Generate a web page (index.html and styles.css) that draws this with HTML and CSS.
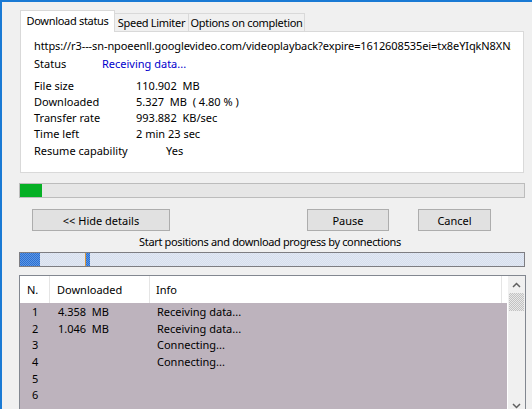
FILE: index.html
```html
<!DOCTYPE html>
<html lang="en">
<head>
  <meta charset="UTF-8" />
  <title>Download status</title>
  <link rel="stylesheet" href="styles.css">
</head>
<body>
  <div class="window">
    <div class="tabs">
      <div class="tab active">Download status</div>
      <div class="tab">Speed Limiter</div>
      <div class="tab">Options on completion</div>
    </div>

    <div class="panel">
      <div class="url">https://r3---sn-npoeenll.googlevideo.com/videoplayback?expire=1612608535ei=tx8eYIqkN8XNz7sF</div>
      <div class="status-row">
        <span class="status-label">Status</span>
        <span class="status-value">Receiving data...</span>
      </div>
      <div class="info">
        <div class="info-row"><span class="label">File size</span><span>110.902&nbsp; MB</span></div>
        <div class="info-row"><span class="label">Downloaded</span><span>5.327&nbsp; MB&nbsp; ( 4.80 % )</span></div>
        <div class="info-row"><span class="label">Transfer rate</span><span>993.882&nbsp; KB/sec</span></div>
        <div class="info-row"><span class="label">Time left</span><span>2 min 23 sec</span></div>
        <div class="info-row resume"><span class="label">Resume capability</span><span class="yes">Yes</span></div>
      </div>
    </div>

    <div class="progress"><div class="progress-fill" style="width: 22px"></div></div>

    <div class="buttons">
      <button class="btn btn-details">&lt;&lt; Hide details</button>
      <button class="btn btn-pause">Pause</button>
      <button class="btn btn-cancel">Cancel</button>
    </div>

    <div class="caption">Start positions and download progress by connections</div>

    <div class="conn-bar">
      <div class="seg" style="left: 0; width: 20px"></div>
      <div class="marker" style="left: 65px"></div>
      <div class="seg" style="left: 66px; width: 4px"></div>
    </div>

    <div class="list">
      <div class="list-body">
        <div class="list-head">
          <div class="col-n">N.</div>
          <div class="col-dl">Downloaded</div>
          <div class="col-info">Info</div>
        </div>
        <div class="rows">
          <div class="row"><span class="col-n">1</span><span class="col-dl">4.358&nbsp; MB</span><span class="col-info">Receiving data...</span></div>
          <div class="row"><span class="col-n">2</span><span class="col-dl">1.046&nbsp; MB</span><span class="col-info">Receiving data...</span></div>
          <div class="row"><span class="col-n">3</span><span class="col-dl"></span><span class="col-info">Connecting...</span></div>
          <div class="row"><span class="col-n">4</span><span class="col-dl"></span><span class="col-info">Connecting...</span></div>
          <div class="row"><span class="col-n">5</span><span class="col-dl"></span><span class="col-info"></span></div>
          <div class="row"><span class="col-n">6</span><span class="col-dl"></span><span class="col-info"></span></div>
        </div>
      </div>
      <div class="scrollbar">
        <svg class="arrow" width="9" height="6" viewBox="0 0 9 6"><path d="M1 5 L4.5 1.5 L8 5" fill="none" stroke="#606060" stroke-width="1.5"/></svg>
        <div class="thumb"></div>
        <div class="track"></div>
        <svg class="arrow" width="9" height="6" viewBox="0 0 9 6"><path d="M1 1 L4.5 4.5 L8 1" fill="none" stroke="#606060" stroke-width="1.5"/></svg>
      </div>
    </div>
  </div>
</body>
</html>
```

FILE: styles.css
```css
body {
  margin: 0;
  background: #f0f0f0;
  font-family: 'Noto Sans', sans-serif;
  font-size: 11px;
  color: #000;
}
.window {
  height: 407px;
  border-top: 2px solid #1a7ad4;
  border-left: 2px solid #1a7ad4;
  overflow: hidden;
}
.tabs {
  display: flex;
  align-items: flex-end;
  margin: 8px 0 0 18px;
  position: relative;
  z-index: 1;
}
.tab {
  height: 17px;
  line-height: 17px;
  box-sizing: content-box;
  border: 1px solid #d9d9d9;
  border-bottom: none;
  border-left: none;
  background: #f0f0f0;
  text-align: center;
  letter-spacing: -0.3px;
  white-space: nowrap;
}
.tab.active {
  height: 21px;
  line-height: 20px;
  width: 93px;
  border-left: 1px solid #d9d9d9;
  background: #fff;
  margin-bottom: -1px;
}
.tab:nth-child(2) { width: 73px; }
.tab:nth-child(3) { width: 115px; }
.panel {
  margin: 0 8px 0 18px;
  border: 1px solid #d9d9d9;
  background: #fff;
  padding: 6px 0 0 13px;
  box-sizing: border-box;
  height: 142px;
  line-height: 16px;
  overflow: hidden;
}
.url {
  white-space: nowrap;
  overflow: hidden;
  width: 477px;
  letter-spacing: -0.1px;
}
.status-row {
  display: flex;
  margin-top: 2px;
}
.status-label { width: 68px; }
.status-value { color: #0000cc; }
.info { margin-top: 6px; }
.info-row { display: flex; white-space: nowrap; }
.label { width: 102px; }
.resume { margin-top: 1px; }
.yes { margin-left: 30px; }
.progress {
  margin: 10px 0 0 17px;
  width: 506px;
  height: 15px;
  box-sizing: border-box;
  border: 1px solid #bcbcbc;
  background: #e6e6e6;
}
.progress-fill {
  height: 100%;
  background: #06b025;
}
.buttons {
  display: flex;
  margin: 11px 0 0 30px;
}
.btn {
  height: 22px;
  padding: 0;
  font-family: inherit;
  font-size: 11px;
  background: #e1e1e1;
  border: 1px solid #adadad;
  color: #000;
}
.btn-details { width: 138px; }
.btn-pause { width: 82px; margin-left: 137px; }
.btn-cancel { width: 73px; margin-left: 29px; }
.caption {
  text-align: center;
  margin: 3px 0 0 6px;
  line-height: 16px;
  letter-spacing: -0.35px;
}
.conn-bar {
  position: relative;
  margin: 2px 0 0 17px;
  width: 506px;
  height: 15px;
  box-sizing: border-box;
  border: 1px solid #7d7d82;
  background: repeating-conic-gradient(#e2e8f3 0 25%, #d6dfee 0 50%) 0 0 / 2px 2px;
}
.seg {
  position: absolute;
  top: 0;
  height: 13px;
  background: repeating-conic-gradient(#2d6fcf 0 25%, #5b97e6 0 50%) 0 0 / 2px 2px;
}
.marker {
  position: absolute;
  top: 0;
  width: 1px;
  height: 13px;
  background: #d8963a;
}
.list {
  display: flex;
  margin: 8px 0 0 17px;
  width: 507px;
  height: 140px;
  box-sizing: border-box;
  border: 1px solid #828790;
  background: #fff;
}
.list-body {
  flex: 1;
  overflow: hidden;
}
.list-head {
  display: flex;
  height: 27px;
  line-height: 27px;
  background: #fff;
  width: 481px;
  border-right: 1px solid #e5e5e5;
}
.list-head .col-n,
.list-head .col-dl {
  border-right: 1px solid #e5e5e5;
}
.col-n { width: 30px; padding-left: 7px; box-sizing: border-box; }
.col-dl { width: 100px; padding-left: 7px; box-sizing: border-box; }
.col-info { padding-left: 6px; }
.rows {
  background: #bdb3bd;
  width: 487px;
  height: 120px;
  padding-top: 1px;
}
.row {
  display: flex;
  height: 16.7px;
  line-height: 16.7px;
}
.row .col-n { padding-left: 12px; }
.row .col-dl { padding-left: 8px; }
.row .col-info { padding-left: 7px; }
.scrollbar {
  width: 17px;
  background: #f0f0f0;
  display: flex;
  flex-direction: column;
  align-items: center;
}
.arrow { margin: 6px 0 5px; flex: none; }
.thumb {
  width: 15px;
  height: 18px;
  flex: none;
  background: repeating-conic-gradient(#c2c2c2 0 25%, #e8e8e8 0 50%) 0 0 / 2px 2px;
}
.track { flex: 1; }
```
